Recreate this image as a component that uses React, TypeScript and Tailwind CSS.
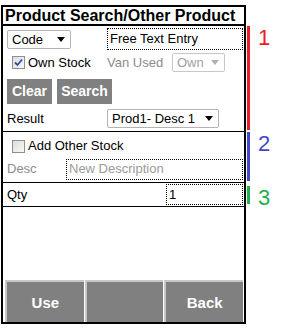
import React from 'react';

const font = { fontFamily: '"Liberation Sans", Arial, sans-serif' };

const Arrow: React.FC<{ muted?: boolean }> = ({ muted }) => (
    <svg width="8" height="5" viewBox="0 0 8 5" className={muted ? 'text-[#b0b0b0]' : 'text-black'}>
        <path d="M0 0 L8 0 L4 5 Z" fill="currentColor" />
    </svg>
);

const Select: React.FC<{ value: string; width: string; muted?: boolean }> = ({ value, width, muted }) => (
    <div
        className={`${width} h-[19px] flex items-center justify-between pl-[4px] pr-[5px] rounded-[2px] border bg-white text-[13px] leading-none ${muted ? 'border-[#c8c8c8] text-[#a0a0a0]' : 'border-[#b4b4b4] text-black'}`}
    >
        <span>{value}</span>
        <Arrow muted={muted} />
    </div>
);

const Check: React.FC<{ checked?: boolean }> = ({ checked }) => (
    <span className="w-[13px] h-[13px] border border-[#8e8f8f] bg-gradient-to-br from-[#dcdcdc] to-[#f8f8f8] flex items-center justify-center shrink-0">
        {checked && (
            <svg width="9" height="9" viewBox="0 0 9 9">
                <path d="M1 4.5 L3.5 7 L8 1.5" stroke="#2a4fa8" strokeWidth="1.8" fill="none" />
            </svg>
        )}
    </span>
);

const GreyBtn: React.FC<{ label: string; width: string }> = ({ label, width }) => (
    <div className={`${width} h-[25px] bg-[#808080] text-white font-bold text-[14px] flex items-center justify-center`}>
        {label}
    </div>
);

const BottomBtn: React.FC<{ label?: string }> = ({ label }) => (
    <div className="flex-1 h-[42px] bg-[#808080] border-t-2 border-l-2 border-[#c8c8c8] text-white font-bold text-[15px] flex items-center justify-center pt-[2px]">
        {label}
    </div>
);

export default function App() {
    return (
        <div className="flex pt-[5px] pl-[1px] bg-white" style={font}>
            {/* Main frame */}
            <div className="w-[245px] h-[319px] border-2 border-black flex flex-col">
                {/* Title */}
                <div className="h-[19px] border-b-2 border-black pl-[2px] text-[16px] font-bold leading-[17px] text-black">
                    Product Search/Other Product
                </div>

                {/* Section 1 */}
                <div className="h-[106px] border-b border-black pl-[4px] pt-[2px] text-[13px] text-black">
                    <div className="h-[22px] flex items-center">
                        <div className="w-[100px]">
                            <Select value="Code" width="w-[64px]" />
                        </div>
                        <div className="w-[136px] h-[22px] border border-dotted border-black flex items-center pl-[2px]">
                            Free Text Entry
                        </div>
                    </div>
                    <div className="h-[19px] mt-[3px] flex items-center">
                        <div className="w-[100px] flex items-center gap-[3px] pl-[5px]">
                            <Check checked />
                            <span>Own Stock</span>
                        </div>
                        <span className="text-[#8c8c8c] w-[65px]">Van Used</span>
                        <Select value="Own" width="w-[53px]" muted />
                    </div>
                    <div className="mt-[7px] flex gap-[5px]">
                        <GreyBtn label="Clear" width="w-[45px]" />
                        <GreyBtn label="Search" width="w-[55px]" />
                    </div>
                    <div className="h-[19px] mt-[5px] flex items-center">
                        <span className="w-[100px]">Result</span>
                        <Select value="Prod1- Desc 1" width="w-[112px]" />
                    </div>
                </div>

                {/* Section 2 */}
                <div className="h-[51px] border-b border-black pl-[4px] pt-[7px] text-[13px]">
                    <div className="h-[14px] flex items-center gap-[3px] pl-[5px] text-black">
                        <Check />
                        <span>Add Other Stock</span>
                    </div>
                    <div className="h-[22px] mt-[5px] flex items-center">
                        <span className="w-[59px] text-[#8c8c8c]">Desc</span>
                        <div className="w-[177px] h-[21px] border border-dotted border-black flex items-center pl-[2px] text-[#9a9a9a]">
                            New Description
                        </div>
                    </div>
                </div>

                {/* Section 3 */}
                <div className="h-[24px] border-b border-black pl-[4px] flex items-center text-[13px] text-black">
                    <span className="w-[159px]">Qty</span>
                    <div className="w-[77px] h-[21px] border border-dotted border-black flex items-center pl-[2px]">
                        1
                    </div>
                </div>

                <div className="flex-1" />

                {/* Bottom buttons */}
                <div className="flex gap-[1px] pl-[2px] pr-[1px]">
                    <BottomBtn label="Use" />
                    <BottomBtn />
                    <BottomBtn label="Back" />
                </div>
            </div>

            {/* Section markers */}
            <div className="flex flex-col pt-[21px] pl-[1px]">
                <div className="h-[104px] flex">
                    <div className="w-[3px] bg-[#ed1c24]" />
                    <span className="ml-[8px] text-[22px] leading-[22px] mt-[1px] text-[#ed1c24]">1</span>
                </div>
                <div className="h-[49px] mt-[2px] flex">
                    <div className="w-[3px] bg-[#3f48cc]" />
                    <span className="ml-[8px] text-[22px] leading-[22px] mt-[1px] text-[#3f48cc]">2</span>
                </div>
                <div className="h-[18px] mt-[5px] flex">
                    <div className="w-[3px] bg-[#22b14c]" />
                    <span className="ml-[8px] text-[22px] leading-[22px] mt-[1px] text-[#22b14c]">3</span>
                </div>
            </div>
        </div>
    );
}
